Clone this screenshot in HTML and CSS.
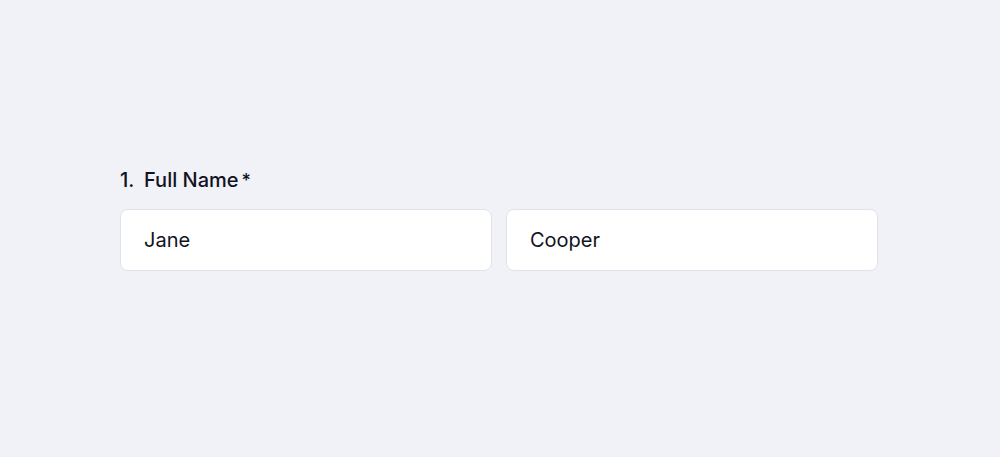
FILE: index.html
```html
<!DOCTYPE html>
<html lang="en">
<head>
<meta charset="utf-8">
<link rel="stylesheet" href="styles.css">
</head>
<body>
<main class="page">
  <div class="field">
    <div class="label"><span class="num">1.</span><span class="text">Full Name</span><span class="req">*</span></div>
    <div class="inputs">
      <div class="input">Jane</div>
      <div class="input">Cooper</div>
    </div>
  </div>
</main>
</body>
</html>
```
FILE: styles.css
```css
html, body {
  margin: 0;
  padding: 0;
  background: #f1f2f7;
  font-family: Inter, "Noto Sans", sans-serif;
  color: #111322;
}
.page {
  width: 1000px;
  height: 457px;
  box-sizing: border-box;
  padding: 166px 122px 0 120px;
}
.field {
  width: 758px;
}
.label {
  display: flex;
  align-items: baseline;
  font-size: 20px;
  font-weight: 450;
  line-height: 28px;
  height: 28px;
  margin-bottom: 15px;
}
.num {
  width: 24px;
}
.req {
  margin-left: 3px;
  font-size: 18px;
}
.inputs {
  display: grid;
  grid-template-columns: 1fr 1fr;
  gap: 14px;
}
.input {
  height: 62px;
  box-sizing: border-box;
  background: #ffffff;
  border: 1px solid #e1e3ea;
  border-radius: 8px;
  padding: 0 23px;
  display: flex;
  align-items: center;
  font-size: 20px;
  font-weight: 400;
}
```
